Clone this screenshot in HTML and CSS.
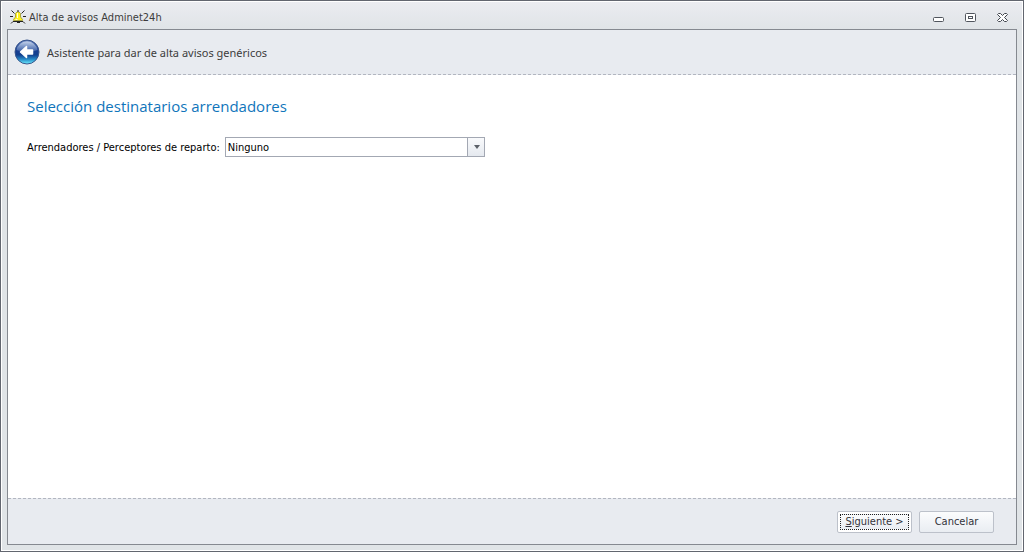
FILE: index.html
```
<!DOCTYPE html>
<html lang="es">
<head>
    <meta charset="UTF-8">
    <meta name="viewport" content="width=device-width, initial-scale=1.0">
    <title>Alta de avisos Adminet24h</title>
    <link rel="stylesheet" href="styles.css">
</head>
<body>
    <div class="window">
        <!-- Title bar -->
        <header class="title-bar">
            <svg class="bell-icon" width="16" height="16" viewBox="0 0 16 16" aria-hidden="true">
                <path d="M1.500 1.500l3 3M14.500 1.500l-3 3M0 7.500h3M13 7.500h3M1 14.500l2-2M15 14.500l-2-2" stroke="#222" fill="none"/>
                <path d="M7 3h2l1.500 1.500V8l2 2.500v1h-9v-1L5.500 8V4.500z" fill="#fff21a" stroke="#aaa640"/>
                <path d="M7.500 4v5M5.500 10.500h2" stroke="#fffde0"/>
                <path d="M3 12.500h10M7 13.500h3M8 1v2" stroke="#222"/>
            </svg>
            <h1>Alta de avisos Adminet24h</h1>
            <div class="window-controls">
                <button type="button" aria-label="Minimizar">
                    <svg width="11" height="9" viewBox="0 0 11 9"><rect x=".5" y="4.500" width="10" height="4" rx="1" fill="#fff" stroke="#50555d"/></svg>
                </button>
                <button type="button" aria-label="Maximizar">
                    <svg width="11" height="9" viewBox="0 0 11 9"><rect x=".5" y=".5" width="10" height="8" rx="1" fill="#fff" stroke="#50555d"/><rect x="3.500" y="3.500" width="4" height="2" fill="#fff" stroke="#50555d"/></svg>
                </button>
                <button type="button" aria-label="Cerrar">
                    <svg width="11" height="9" viewBox="0 0 11 9"><path d="M1.500.5h2l2 2 2-2h2l1 1-3 3 3 3-1 1h-2l-2-2-2 2h-2l-1-1 3-3-3-3z" fill="#fff" stroke="#40454d"/></svg>
                </button>
            </div>
        </header>

        <!-- Wizard -->
        <form class="wizard">
            <div class="wizard-header">
                <button type="button" class="back-button" aria-label="Atrás">
                    <svg width="26" height="26" viewBox="0 0 26 26">
                        <defs>
                            <linearGradient id="ball" x1="0" y1="0" x2="0" y2="1">
                                <stop offset="0" stop-color="#5878b8"/>
                                <stop offset=".45" stop-color="#183f91"/>
                                <stop offset=".62" stop-color="#12408f"/>
                                <stop offset=".8" stop-color="#2688c6"/>
                                <stop offset="1" stop-color="#6ff0ff"/>
                            </linearGradient>
                            <linearGradient id="shine" x1="0" y1="0" x2="0" y2="1">
                                <stop offset="0" stop-color="#e2ebf8" stop-opacity=".8"/>
                                <stop offset="1" stop-color="#8aa6d4" stop-opacity=".3"/>
                            </linearGradient>
                        </defs>
                        <circle cx="13" cy="13" r="12" fill="url(#ball)" stroke="#3b568c"/>
                        <path d="M2.500 11a10.700 10.700 0 0 1 21 0C18 13.500 8 13.500 2.500 11z" fill="url(#shine)"/>
                        <path d="M6.500 13l6-5.500v3.500h6v4h-6v3.500z" fill="#fff" stroke="#fff" stroke-width="1.500" stroke-linejoin="round"/>
                    </svg>
                </button>
                <p>Asistente para dar de alta avisos genéricos</p>
            </div>

            <main class="wizard-page">
                <h2>Selección destinatarios arrendadores</h2>
                <div class="field">
                    <label for="arrendadores">Arrendadores / Perceptores de reparto:</label>
                    <div class="combo">
                        <select id="arrendadores">
                            <option>Ninguno</option>
                        </select>
                    </div>
                </div>
            </main>

            <footer class="wizard-footer">
                <button type="button" class="button button-focus"><span><u>S</u>iguiente &gt;</span></button>
                <button type="button" class="button">Cancelar</button>
            </footer>
        </form>
    </div>
</body>
</html>
```
FILE: styles.css
```
* {
    box-sizing: border-box;
}

body {
    margin: 0;
    font-family: Tahoma, "DejaVu Sans Condensed", sans-serif;
    font-size: 11px;
    color: #000;
}

button {
    font-family: inherit;
    font-size: inherit;
}

svg {
    display: block;
}

/* Window frame */
.window {
    display: flex;
    flex-direction: column;
    min-height: 100vh;
    padding: 0 6px 6px;
    border: 1px solid #62666f;
    background: linear-gradient(#ebecf1, #e0e4e7 28px);
    box-shadow: inset 0 0 0 1px #fff;
}

.title-bar {
    display: flex;
    align-items: center;
    height: 28px;
    padding: 4px 9px 0 3px;
    color: #3c3c3c;
}

.title-bar h1 {
    margin: 0 auto 0 3px;
    font-size: 11px;
    font-weight: normal;
}

.window-controls {
    display: flex;
    gap: 21px;
}

.window-controls button {
    padding: 0;
    border: none;
    background: none;
}

/* Wizard layout */
.wizard {
    flex: 1;
    display: flex;
    flex-direction: column;
    border: 1px solid #858990;
    background-color: #fff;
}

.wizard-header,
.wizard-footer {
    display: flex;
    align-items: center;
    height: 45px;
    background-color: #e8ebf0;
}

.wizard-header {
    gap: 7px;
    padding: 0 6px;
    border-bottom: 1px dashed #b2b6c0;
}

.wizard-header p {
    margin: 0;
    font-family: "Segoe UI", "Noto Sans", sans-serif;
    font-size: 11px;
    color: #3c3c3c;
}

.back-button {
    padding: 0;
    border: none;
    background: none;
}

.wizard-page {
    flex: 1;
    padding: 20px 19px;
}

.wizard-page h2 {
    margin: 0 0 20px;
    font-family: "Segoe UI", "Open Sans", sans-serif;
    font-size: 15px;
    font-weight: normal;
    line-height: 22px;
    color: #1075bb;
}

.field {
    display: flex;
    align-items: center;
    gap: 5px;
}

/* Combo box */
.combo {
    position: relative;
    width: 260px;
}

.combo select {
    display: block;
    width: 100%;
    height: 20px;
    padding: 0 20px 0 2px;
    border: 1px solid #a3a8b3;
    border-radius: 0;
    background-color: #fff;
    font-family: inherit;
    font-size: inherit;
    color: #000;
    appearance: none;
}

.combo::before {
    content: '';
    position: absolute;
    top: 1px;
    right: 1px;
    bottom: 1px;
    width: 16px;
    border-left: 1px solid #a3a8b3;
    background: linear-gradient(#f9fafc, #e5e9ef);
    pointer-events: none;
}

.combo::after {
    content: '';
    position: absolute;
    top: 8px;
    right: 5px;
    border: 3px solid transparent;
    border-top: 4px solid #5b6068;
    border-bottom: none;
    pointer-events: none;
}

/* Footer buttons */
.wizard-footer {
    height: 46px;
    justify-content: flex-end;
    gap: 7px;
    padding: 0 22px;
    border-top: 1px dashed #b2b6c0;
}

.button {
    width: 75px;
    height: 22px;
    padding: 0;
    border: 1px solid #bcc1ca;
    border-radius: 2px;
    background: linear-gradient(#fbfcfd, #e9edf2);
    color: #32323a;
}

.button-focus {
    padding: 2px;
    background: #fff;
}

.button-focus span {
    display: flex;
    align-items: center;
    justify-content: center;
    height: 100%;
    border: 1px dotted #222;
    background: linear-gradient(#fbfcfd, #e9edf2);
    white-space: pre;
}
```
